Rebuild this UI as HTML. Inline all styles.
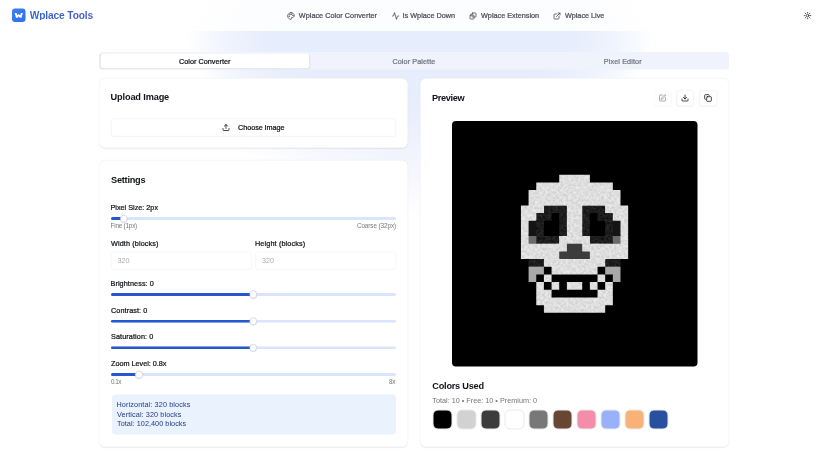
<!DOCTYPE html>
<html lang="en">
<head>
<meta charset="utf-8">
<title>Wplace Tools</title>
<style>
html,body{margin:0;padding:0;background:#fff;}
body{width:828px;height:457px;overflow:hidden;position:relative;font-family:"Liberation Sans",sans-serif;}
#root{position:absolute;left:0;top:0;width:1656px;height:914px;transform:scale(.5);transform-origin:0 0;overflow:hidden;}
.b{position:absolute;}
.i{position:absolute;display:block;overflow:hidden;}
.t{position:absolute;white-space:pre;line-height:20px;display:block;}
</style>
</head>
<body>
<div id="root">
<div class="b" style="left:0px;top:0px;width:1656px;height:914px;background:radial-gradient(ellipse 470px 200px at 840px 70px, rgba(230,237,252,1) 0%, rgba(230,237,252,1) 62%, rgba(230,237,252,.5) 81%, rgba(230,237,252,0) 100%),radial-gradient(ellipse 460px 364px at 840px 70px, rgba(238,240,253,1) 0%, rgba(238,240,253,1) 55%, rgba(238,240,253,.5) 77%, rgba(238,240,253,0) 100%);"></div>
<div class="b" style="left:0px;top:0px;width:1656px;height:62px;background:rgba(255,255,255,.88);"></div>
<div class="b" style="left:24px;top:17px;width:27px;height:27px;background:linear-gradient(135deg,#3b82f6,#2f6fe8);border-radius:6px;"><svg width="27" height="27" viewBox="0 0 27 27" style="display:block"><path d="M5.4 8.8 L9.3 8.8 L10.6 13.6 L13.5 10.8 L16.4 13.6 L17.7 8.8 L21.6 8.8 L19 18.4 L15.4 18.4 L13.5 15.6 L11.6 18.4 L8 18.4 Z" fill="#fff"/></svg></div>
<svg class="i" style="left:574.00px;top:23.50px;color:#484b55;" width="16" height="16" viewBox="0 0 24 24" fill="none" stroke="#484b55" stroke-width="2.4" stroke-linecap="round" stroke-linejoin="round"><circle cx="13.5" cy="6.5" r=".5" fill="currentColor"/><circle cx="17.5" cy="10.5" r=".5" fill="currentColor"/><circle cx="8.5" cy="7.5" r=".5" fill="currentColor"/><circle cx="6.5" cy="12.5" r=".5" fill="currentColor"/><path d="M12 2C6.5 2 2 6.5 2 12s4.5 10 10 10c.926 0 1.648-.746 1.648-1.688 0-.437-.18-.835-.437-1.125-.29-.289-.438-.652-.438-1.125a1.64 1.64 0 0 1 1.668-1.668h1.996c3.051 0 5.555-2.503 5.555-5.554C21.965 6.012 17.461 2 12 2z"/></svg>
<svg class="i" style="left:782.50px;top:23.50px;" width="16" height="16" viewBox="0 0 24 24" fill="none" stroke="#484b55" stroke-width="2.4" stroke-linecap="round" stroke-linejoin="round"><path d="M22 12h-2.48a2 2 0 0 0-1.93 1.46l-2.35 8.36a.25.25 0 0 1-.48 0L9.24 2.18a.25.25 0 0 0-.48 0l-2.35 8.36A2 2 0 0 1 4.49 12H2"/></svg>
<svg class="i" style="left:937.50px;top:23.50px;" width="16" height="16" viewBox="0 0 24 24" fill="none" stroke="#484b55" stroke-width="2.4" stroke-linecap="round" stroke-linejoin="round"><rect x="9" y="3" width="12" height="12" rx="2"/><rect x="3" y="9" width="12" height="12" rx="2"/></svg>
<svg class="i" style="left:1105.50px;top:23.50px;" width="16" height="16" viewBox="0 0 24 24" fill="none" stroke="#484b55" stroke-width="2.4" stroke-linecap="round" stroke-linejoin="round"><path d="M15 3h6v6"/><path d="M10 14 21 3"/><path d="M18 13v6a2 2 0 0 1-2 2H5a2 2 0 0 1-2-2V8a2 2 0 0 1 2-2h6"/></svg>
<svg class="i" style="left:1606.50px;top:22.80px;" width="16.4" height="16.4" viewBox="0 0 24 24" fill="none" stroke="#2a2d34" stroke-width="2.4" stroke-linecap="round" stroke-linejoin="round"><circle cx="12" cy="12" r="4"/><path d="M12 2v2"/><path d="M12 20v2"/><path d="m4.93 4.93 1.41 1.41"/><path d="m17.66 17.66 1.41 1.41"/><path d="M2 12h2"/><path d="M20 12h2"/><path d="m6.34 17.66-1.41 1.41"/><path d="m19.07 4.93-1.41 1.41"/></svg>
<div class="b" style="left:198px;top:104px;width:1260px;height:35px;background:#f0f3fc;border-radius:8px;"></div>
<div class="b" style="left:201px;top:107px;width:418px;height:30px;background:#fff;border-radius:6px;box-shadow:0 1px 3px rgba(0,0,0,.10),0 1px 2px rgba(0,0,0,.06);"></div>
<div class="b" style="left:198px;top:156px;width:618px;height:140px;background:#fff;border:1px solid #eef0f5;border-radius:12px;box-sizing:border-box;box-shadow:0 1px 3px rgba(0,0,0,.05),0 1px 2px rgba(0,0,0,.03);"></div>
<div class="b" style="left:198px;top:320px;width:618px;height:574px;background:#fff;border:1px solid #eef0f5;border-radius:12px;box-sizing:border-box;box-shadow:0 1px 3px rgba(0,0,0,.05),0 1px 2px rgba(0,0,0,.03);"></div>
<div class="b" style="left:840px;top:156px;width:618px;height:738px;background:#fff;border:1px solid #eef0f5;border-radius:12px;box-sizing:border-box;box-shadow:0 1px 3px rgba(0,0,0,.05),0 1px 2px rgba(0,0,0,.03);"></div>
<div class="b" style="left:222px;top:237px;width:570px;height:35.5px;background:#fff;border:1px solid #eceef2;border-radius:6px;box-sizing:border-box;box-shadow:0 1px 2px rgba(0,0,0,.04);"></div>
<svg class="i" style="left:444.00px;top:246.50px;" width="16" height="16" viewBox="0 0 24 24" fill="none" stroke="#101217" stroke-width="2.3" stroke-linecap="round" stroke-linejoin="round"><path d="M21 15v4a2 2 0 0 1-2 2H5a2 2 0 0 1-2-2v-4"/><polyline points="17 8 12 3 7 8"/><line x1="12" x2="12" y1="3" y2="15"/></svg>
<div class="b" style="left:222px;top:503px;width:281px;height:35.5px;background:#fff;border:1px solid #f1f2f5;border-radius:6px;box-sizing:border-box;box-shadow:0 1px 2px rgba(0,0,0,.03);"></div>
<div class="b" style="left:511px;top:503px;width:281px;height:35.5px;background:#fff;border:1px solid #f1f2f5;border-radius:6px;box-sizing:border-box;box-shadow:0 1px 2px rgba(0,0,0,.03);"></div>
<div class="b" style="left:222px;top:434.45px;width:570px;height:5.5px;background:#dbe4fa;border-radius:3px;"></div><div class="b" style="left:222px;top:434.45px;width:25.871px;height:5.5px;background:#2458d0;border-radius:3px 0 0 3px;"></div><div class="b" style="left:240.271px;top:429.6px;width:15.2px;height:15.2px;background:#fff;border:1px solid #b4bcdc;border-radius:50%;box-sizing:border-box;box-shadow:0 1px 2px rgba(0,0,0,.10);"></div>
<div class="b" style="left:222px;top:586.25px;width:570px;height:5.5px;background:#dbe4fa;border-radius:3px;"></div><div class="b" style="left:222px;top:586.25px;width:284.4px;height:5.5px;background:#2458d0;border-radius:3px 0 0 3px;"></div><div class="b" style="left:498.8px;top:581.4px;width:15.2px;height:15.2px;background:#fff;border:1px solid #b4bcdc;border-radius:50%;box-sizing:border-box;box-shadow:0 1px 2px rgba(0,0,0,.10);"></div>
<div class="b" style="left:222px;top:639.55px;width:570px;height:5.5px;background:#dbe4fa;border-radius:3px;"></div><div class="b" style="left:222px;top:639.55px;width:284.4px;height:5.5px;background:#2458d0;border-radius:3px 0 0 3px;"></div><div class="b" style="left:498.8px;top:634.7px;width:15.2px;height:15.2px;background:#fff;border:1px solid #b4bcdc;border-radius:50%;box-sizing:border-box;box-shadow:0 1px 2px rgba(0,0,0,.10);"></div>
<div class="b" style="left:222px;top:692.85px;width:570px;height:5.5px;background:#dbe4fa;border-radius:3px;"></div><div class="b" style="left:222px;top:692.85px;width:284.4px;height:5.5px;background:#2458d0;border-radius:3px 0 0 3px;"></div><div class="b" style="left:498.8px;top:688px;width:15.2px;height:15.2px;background:#fff;border:1px solid #b4bcdc;border-radius:50%;box-sizing:border-box;box-shadow:0 1px 2px rgba(0,0,0,.10);"></div>
<div class="b" style="left:222px;top:746.45px;width:570px;height:5.5px;background:#dbe4fa;border-radius:3px;"></div><div class="b" style="left:222px;top:746.45px;width:56.0886px;height:5.5px;background:#2458d0;border-radius:3px 0 0 3px;"></div><div class="b" style="left:270.489px;top:741.6px;width:15.2px;height:15.2px;background:#fff;border:1px solid #b4bcdc;border-radius:50%;box-sizing:border-box;box-shadow:0 1px 2px rgba(0,0,0,.10);"></div>
<div class="b" style="left:223.6px;top:788.8px;width:568.4px;height:80.4px;background:#eaf2fe;border-radius:8px;"></div>
<div class="b" style="left:1307.7px;top:179.5px;width:35px;height:32px;background:#fff;border:1px solid #eceef2;border-radius:6px;box-sizing:border-box;box-shadow:0 1px 2px rgba(0,0,0,.04);opacity:0.5;"></div>
<svg class="i" style="left:1317.20px;top:187.70px;" width="16" height="16" viewBox="0 0 24 24" fill="none" stroke="#8d9199" stroke-width="2.3" stroke-linecap="round" stroke-linejoin="round"><path d="M12 3H5a2 2 0 0 0-2 2v14a2 2 0 0 0 2 2h14a2 2 0 0 0 2-2v-7"/><path d="M18.375 2.625a1 1 0 0 1 3 3l-9.013 9.014a2 2 0 0 1-.853.505l-2.873.84a.5.5 0 0 1-.62-.62l.84-2.873a2 2 0 0 1 .506-.852z"/></svg>
<div class="b" style="left:1352.9px;top:179.5px;width:35px;height:32px;background:#fff;border:1px solid #eceef2;border-radius:6px;box-sizing:border-box;box-shadow:0 1px 2px rgba(0,0,0,.04);opacity:1;"></div>
<svg class="i" style="left:1362.40px;top:187.70px;" width="16" height="16" viewBox="0 0 24 24" fill="none" stroke="#101217" stroke-width="2.3" stroke-linecap="round" stroke-linejoin="round"><path d="M21 15v4a2 2 0 0 1-2 2H5a2 2 0 0 1-2-2v-4"/><polyline points="7 10 12 15 17 10"/><line x1="12" x2="12" y1="15" y2="3"/></svg>
<div class="b" style="left:1398.7px;top:179.5px;width:35px;height:32px;background:#fff;border:1px solid #eceef2;border-radius:6px;box-sizing:border-box;box-shadow:0 1px 2px rgba(0,0,0,.04);opacity:1;"></div>
<svg class="i" style="left:1408.20px;top:187.70px;" width="16" height="16" viewBox="0 0 24 24" fill="none" stroke="#101217" stroke-width="2.3" stroke-linecap="round" stroke-linejoin="round"><rect width="14" height="14" x="8" y="8" rx="2" ry="2"/><path d="M4 16c-1.1 0-2-.9-2-2V4c0-1.1.9-2 2-2h10c1.1 0 2 .9 2 2"/></svg>
<div class="b" style="left:904.4px;top:242px;width:490.2px;height:491px;background:#000;border-radius:8px;overflow:hidden;"><svg style="display:block;position:absolute;left:0;top:0" width="490.2" height="491" viewBox="0 0 32 32" preserveAspectRatio="none"><defs><filter id="nz" x="0" y="0" width="32" height="32" filterUnits="userSpaceOnUse" color-interpolation-filters="sRGB"><feTurbulence type="fractalNoise" baseFrequency="3" numOctaves="2" seed="7" result="t"/><feColorMatrix in="t" type="matrix" values="1 0 0 0 0 1 0 0 0 0 1 0 0 0 0 0 0 0 0 1" result="g"/><feComposite in="SourceGraphic" in2="g" operator="arithmetic" k1="0" k2="1" k3="0.2" k4="-0.10" result="m"/><feComposite in="m" in2="SourceGraphic" operator="in"/></filter></defs><path fill="#dedede" filter="url(#nz)" d="M13.8 7H18.2V8H13.8ZM14 6.8H18V7H14ZM14 8H18V8.2H14ZM10.8 8H21.2V9H10.8ZM11 7.8H21V8H11ZM11 9H21V9.2H11ZM9.8 9H22.2V10H9.8ZM10 8.8H22V9H10ZM10 10H22V10.2H10ZM9.8 10H22.2V11H9.8ZM10 9.8H22V10H10ZM10 11H22V11.2H10ZM8.8 11H12.2V12H8.8ZM9 10.8H12V11H9ZM9 12H12V12.2H9ZM14.8 11H17.2V12H14.8ZM15 10.8H17V11H15ZM15 12H17V12.2H15ZM19.8 11H23.2V12H19.8ZM20 10.8H23V11H20ZM20 12H23V12.2H20ZM8.8 12H11.2V13H8.8ZM9 11.8H11V12H9ZM9 13H11V13.2H9ZM14.8 12H17.2V13H14.8ZM15 11.8H17V12H15ZM15 13H17V13.2H15ZM20.8 12H23.2V13H20.8ZM21 11.8H23V12H21ZM21 13H23V13.2H21ZM8.8 13H10.2V14H8.8ZM9 12.8H10V13H9ZM9 14H10V14.2H9ZM14.8 13H17.2V14H14.8ZM15 12.8H17V13H15ZM15 14H17V14.2H15ZM21.8 13H23.2V14H21.8ZM22 12.8H23V13H22ZM22 14H23V14.2H22ZM8.8 14H10.2V15H8.8ZM9 13.8H10V14H9ZM9 15H10V15.2H9ZM14.8 14H17.2V15H14.8ZM15 13.8H17V14H15ZM15 15H17V15.2H15ZM21.8 14H23.2V15H21.8ZM22 13.8H23V14H22ZM22 15H23V15.2H22ZM8.8 15H10.2V16H8.8ZM9 14.8H10V15H9ZM9 16H10V16.2H9ZM13.8 15H18.2V16H13.8ZM14 14.8H18V15H14ZM14 16H18V16.2H14ZM21.8 15H23.2V16H21.8ZM22 14.8H23V15H22ZM22 16H23V16.2H22ZM8.8 16H15.2V17H8.8ZM9 15.8H15V16H9ZM9 17H15V17.2H9ZM16.8 16H23.2V17H16.8ZM17 15.8H23V16H17ZM17 17H23V17.2H17ZM8.8 17H14.2V18H8.8ZM9 16.8H14V17H9ZM9 18H14V18.2H9ZM17.8 17H23.2V18H17.8ZM18 16.8H23V17H18ZM18 18H23V18.2H18ZM11.8 18H20.2V19H11.8ZM12 17.8H20V18H12ZM12 19H20V19.2H12ZM12.8 19H19.2V20H12.8ZM13 18.8H19V19H13ZM13 20H19V20.2H13ZM11.8 20H13.2V21H11.8ZM12 19.8H13V20H12ZM12 21H13V21.2H12ZM18.8 20H20.2V21H18.8ZM19 19.8H20V20H19ZM19 21H20V21.2H19ZM10.8 21H12.2V22H10.8ZM11 20.8H12V21H11ZM11 22H12V22.2H11ZM12.8 21H14.2V22H12.8ZM13 20.8H14V21H13ZM13 22H14V22.2H13ZM14.8 21H17.2V22H14.8ZM15 20.8H17V21H15ZM15 22H17V22.2H15ZM17.8 21H19.2V22H17.8ZM18 20.8H19V21H18ZM18 22H19V22.2H18ZM19.8 21H21.2V22H19.8ZM20 20.8H21V21H20ZM20 22H21V22.2H20ZM10.8 22H13.2V23H10.8ZM11 21.8H13V22H11ZM11 23H13V23.2H11ZM18.8 22H21.2V23H18.8ZM19 21.8H21V22H19ZM19 23H21V23.2H19ZM10.8 23H21.2V24H10.8ZM11 22.8H21V23H11ZM11 24H21V24.2H11ZM11.8 24H20.2V25H11.8ZM12 23.8H20V24H12ZM12 25H20V25.2H12Z"/><path fill="#a8a8a8" d="M9.8 19H12.2V20H9.8ZM10 18.8H12V19H10ZM10 20H12V20.2H10ZM19.8 19H22.2V20H19.8ZM20 18.8H22V19H20ZM20 20H22V20.2H20ZM9.8 20H11.2V21H9.8ZM10 19.8H11V20H10ZM10 21H11V21.2H10ZM20.8 20H22.2V21H20.8ZM21 19.8H22V20H21ZM21 21H22V21.2H21Z"/><path fill="#6a6a6a" d="M10 15H11.2V16H10ZM10 14.8H11V15H10ZM20.8 15H22V16H20.8ZM21 14.8H22V15H21Z"/><path fill="#3c3c3c" d="M15 16H17V17H15ZM15 17H17V17.2H15ZM14 17H18V18H14ZM15 16.8H17V17H15Z"/><path fill="#1d1d1d" filter="url(#nz)" d="M12 11H15V12H12ZM12 12H15V12.2H12ZM17 11H20V12H17ZM17 12H20V12.2H17ZM11 12H13.2V13H11ZM12 11.8H13V12H12ZM11 13H13V13.2H11ZM13.8 12H15V13H13.8ZM14 11.8H15V12H14ZM14 13H15V13.2H14ZM17 12H18.2V13H17ZM17 11.8H18V12H17ZM17 13H18V13.2H17ZM18.8 12H21V13H18.8ZM19 11.8H20V12H19ZM19 13H21V13.2H19ZM10.8 13H12.2V14H10.8ZM11 12.8H12V13H11ZM11 14H12V14.2H11ZM13.8 13H15V14H13.8ZM14 12.8H15V13H14ZM14 14H15V14.2H14ZM17 13H18.2V14H17ZM17 12.8H18V13H17ZM17 14H18V14.2H17ZM19.8 13H21.2V14H19.8ZM20 12.8H21V13H20ZM20 14H21V14.2H20ZM10.8 14H12.2V15H10.8ZM11 13.8H12V14H11ZM11 15H12V15.2H11ZM13.8 14H15V15H13.8ZM14 13.8H15V14H14ZM17 14H18.2V15H17ZM17 13.8H18V14H17ZM19.8 14H21.2V15H19.8ZM20 13.8H21V14H20ZM20 15H21V15.2H20ZM11 15H14V16H11ZM11 14.8H14V15H11ZM18 15H21V16H18ZM18 14.8H21V15H18ZM9.8 18H12V19H9.8ZM20 18H22.2V19H20Z"/><path fill="#141414" d="M10 13H11V14H10ZM10 14H11V14.2H10ZM21 13H22V14H21ZM21 14H22V14.2H21ZM10 14H11V15H10ZM10 13.8H11V14H10ZM21 14H22V15H21ZM21 13.8H22V14H21Z"/><path fill="#000000" d="M8 6H24V7H8ZM8 5.8H24V6H8ZM8 7H14V7.2H8ZM18 7H24V7.2H18ZM8 7H14V8H8ZM8 6.8H14V7H8ZM8 8H11V8.2H8ZM18 7H24V8H18ZM18 6.8H24V7H18ZM21 8H24V8.2H21ZM8 8H11V9H8ZM8 7.8H11V8H8ZM8 9H10V9.2H8ZM21 8H24V9H21ZM21 7.8H24V8H21ZM22 9H24V9.2H22ZM8 9H10V10H8ZM8 8.8H10V9H8ZM8 10H10V10.2H8ZM22 9H24V10H22ZM22 8.8H24V9H22ZM22 10H24V10.2H22ZM8 10H10V11H8ZM8 9.8H10V10H8ZM8 11H9V11.2H8ZM22 10H24V11H22ZM22 9.8H24V10H22ZM23 11H24V11.2H23ZM8 11H9V12H8ZM8 10.8H9V11H8ZM8 12H9V12.2H8ZM23 11H24V12H23ZM23 10.8H24V11H23ZM23 12H24V12.2H23ZM8 12H9V13H8ZM8 11.8H9V12H8ZM8 13H9V13.2H8ZM13 12H14V13H13ZM13 13H14V13.2H13ZM18 12H19V13H18ZM18 13H19V13.2H18ZM23 12H24V13H23ZM23 11.8H24V12H23ZM23 13H24V13.2H23ZM8 13H9V14H8ZM8 12.8H9V13H8ZM8 14H9V14.2H8ZM12 13H14V14H12ZM13 12.8H14V13H13ZM12 14H14V14.2H12ZM18 13H20V14H18ZM18 12.8H19V13H18ZM18 14H20V14.2H18ZM23 13H24V14H23ZM23 12.8H24V13H23ZM23 14H24V14.2H23ZM8 14H9V15H8ZM8 13.8H9V14H8ZM8 15H9V15.2H8ZM12 14H14V15H12ZM12 13.8H14V14H12ZM18 14H20V15H18ZM18 13.8H20V14H18ZM23 14H24V15H23ZM23 13.8H24V14H23ZM23 15H24V15.2H23ZM8 15H9V16H8ZM8 14.8H9V15H8ZM8 16H9V16.2H8ZM23 15H24V16H23ZM23 14.8H24V15H23ZM23 16H24V16.2H23ZM8 16H9V17H8ZM8 15.8H9V16H8ZM8 17H9V17.2H8ZM23 16H24V17H23ZM23 15.8H24V16H23ZM23 17H24V17.2H23ZM8 17H9V18H8ZM8 16.8H9V17H8ZM8 18H9V18.2H8ZM23 17H24V18H23ZM23 16.8H24V17H23ZM23 18H24V18.2H23ZM8 18H10V19H8ZM8 17.8H9V18H8ZM8 19H10V19.2H8ZM22 18H24V19H22ZM23 17.8H24V18H23ZM22 19H24V19.2H22ZM8 19H10V20H8ZM8 18.8H10V19H8ZM8 20H10V20.2H8ZM12 19H13V20H12ZM19 19H20V20H19ZM22 19H24V20H22ZM22 18.8H24V19H22ZM22 20H24V20.2H22ZM8 20H10V21H8ZM8 19.8H10V20H8ZM8 21H10V21.2H8ZM11 20H12V21H11ZM13 20H19V21H13ZM14 21H15V21.2H14ZM17 21H18V21.2H17ZM20 20H21V21H20ZM22 20H24V21H22ZM22 19.8H24V20H22ZM22 21H24V21.2H22ZM8 21H11V22H8ZM8 20.8H10V21H8ZM8 22H11V22.2H8ZM12 21H13V22H12ZM14 21H15V22H14ZM14 20.8H15V21H14ZM14 22H15V22.2H14ZM17 21H18V22H17ZM17 20.8H18V21H17ZM17 22H18V22.2H17ZM19 21H20V22H19ZM21 21H24V22H21ZM22 20.8H24V21H22ZM21 22H24V22.2H21ZM8 22H11V23H8ZM8 21.8H11V22H8ZM8 23H11V23.2H8ZM13 22H19V23H13ZM14 21.8H15V22H14ZM17 21.8H18V22H17ZM21 22H24V23H21ZM21 21.8H24V22H21ZM21 23H24V23.2H21ZM8 23H11V24H8ZM8 22.8H11V23H8ZM8 24H11V24.2H8ZM21 23H24V24H21ZM21 22.8H24V23H21ZM21 24H24V24.2H21ZM8 24H12V25H8ZM8 23.8H11V24H8ZM8 25H12V25.2H8ZM20 24H24V25H20ZM21 23.8H24V24H21ZM20 25H24V25.2H20ZM8 25H24V26H8ZM8 24.8H12V25H8ZM20 24.8H24V25H20ZM8 26H24V26.2H8Z"/></svg></div>
<div class="b" style="left:865px;top:819px;width:40px;height:40px;background:#000000;border:2px solid #e8eaee;border-radius:11px;box-sizing:border-box;"></div>
<div class="b" style="left:913px;top:819px;width:40px;height:40px;background:#d2d2d2;border:2px solid #e8eaee;border-radius:11px;box-sizing:border-box;"></div>
<div class="b" style="left:961px;top:819px;width:40px;height:40px;background:#3c3c3c;border:2px solid #e8eaee;border-radius:11px;box-sizing:border-box;"></div>
<div class="b" style="left:1009px;top:819px;width:40px;height:40px;background:#ffffff;border:2px solid #e8eaee;border-radius:11px;box-sizing:border-box;"></div>
<div class="b" style="left:1057px;top:819px;width:40px;height:40px;background:#787878;border:2px solid #e8eaee;border-radius:11px;box-sizing:border-box;"></div>
<div class="b" style="left:1105px;top:819px;width:40px;height:40px;background:#684634;border:2px solid #e8eaee;border-radius:11px;box-sizing:border-box;"></div>
<div class="b" style="left:1153px;top:819px;width:40px;height:40px;background:#f38da9;border:2px solid #e8eaee;border-radius:11px;box-sizing:border-box;"></div>
<div class="b" style="left:1201px;top:819px;width:40px;height:40px;background:#99b1fb;border:2px solid #e8eaee;border-radius:11px;box-sizing:border-box;"></div>
<div class="b" style="left:1249px;top:819px;width:40px;height:40px;background:#f8b277;border:2px solid #e8eaee;border-radius:11px;box-sizing:border-box;"></div>
<div class="b" style="left:1297px;top:819px;width:40px;height:40px;background:#28509e;border:2px solid #e8eaee;border-radius:11px;box-sizing:border-box;"></div>
<span class="t" style="left:59.60px;top:20.25px;font-size:20.4px;font-weight:700;color:#3560d0;letter-spacing:-0.288px;background:linear-gradient(90deg,#3364d2,#4a5cc6);-webkit-background-clip:text;background-clip:text;color:transparent;">Wplace Tools</span>
<span class="t" style="left:597.60px;top:20.25px;font-size:14.5px;font-weight:400;color:#484b55;letter-spacing:0.072px;-webkit-text-stroke:0.45px #484b55;">Wplace Color Converter</span>
<span class="t" style="left:805.00px;top:20.25px;font-size:14.5px;font-weight:400;color:#484b55;letter-spacing:0.039px;-webkit-text-stroke:0.45px #484b55;">Is Wplace Down</span>
<span class="t" style="left:962.00px;top:20.25px;font-size:14.5px;font-weight:400;color:#484b55;letter-spacing:0.014px;-webkit-text-stroke:0.45px #484b55;">Wplace Extension</span>
<span class="t" style="left:1129.80px;top:20.25px;font-size:14.5px;font-weight:400;color:#484b55;letter-spacing:-0.011px;-webkit-text-stroke:0.45px #484b55;">Wplace Live</span>
<span class="t" style="left:358.00px;top:112.25px;font-size:14.5px;font-weight:400;color:#101217;letter-spacing:0.035px;-webkit-text-stroke:0.45px #101217;">Color Converter</span>
<span class="t" style="left:784.80px;top:112.25px;font-size:14.5px;font-weight:400;color:#6f7480;letter-spacing:0.170px;-webkit-text-stroke:0.45px #6f7480;">Color Palette</span>
<span class="t" style="left:1207.60px;top:112.25px;font-size:14.5px;font-weight:400;color:#6f7480;letter-spacing:0.208px;-webkit-text-stroke:0.45px #6f7480;">Pixel Editor</span>
<span class="t" style="left:221.20px;top:183.25px;font-size:18.4px;font-weight:700;color:#101217;letter-spacing:-0.305px;">Upload Image</span>
<span class="t" style="left:476.20px;top:244.25px;font-size:14.5px;font-weight:400;color:#101217;letter-spacing:-0.149px;-webkit-text-stroke:0.45px #101217;">Choose Image</span>
<span class="t" style="left:222.20px;top:349.25px;font-size:18.4px;font-weight:700;color:#101217;letter-spacing:-0.531px;">Settings</span>
<span class="t" style="left:221.00px;top:404.25px;font-size:14.5px;font-weight:400;color:#101217;letter-spacing:-0.004px;-webkit-text-stroke:0.45px #101217;">Pixel Size: 2px</span>
<span class="t" style="left:221.00px;top:441.25px;font-size:12.6px;font-weight:400;color:#74767c;letter-spacing:-0.366px;">Fine (1px)</span>
<span class="t" style="left:713.80px;top:441.25px;font-size:12.6px;font-weight:400;color:#74767c;letter-spacing:-0.117px;">Coarse (32px)</span>
<span class="t" style="left:222.00px;top:476.25px;font-size:14.5px;font-weight:400;color:#101217;letter-spacing:0.229px;-webkit-text-stroke:0.45px #101217;">Width (blocks)</span>
<span class="t" style="left:510.00px;top:476.25px;font-size:14.5px;font-weight:400;color:#101217;letter-spacing:0.266px;-webkit-text-stroke:0.45px #101217;">Height (blocks)</span>
<span class="t" style="left:234.80px;top:510.25px;font-size:14.5px;font-weight:400;color:#aaabae;letter-spacing:0.136px;">320</span>
<span class="t" style="left:523.80px;top:510.25px;font-size:14.5px;font-weight:400;color:#aaabae;letter-spacing:0.136px;">320</span>
<span class="t" style="left:221.00px;top:556.25px;font-size:14.5px;font-weight:400;color:#101217;letter-spacing:0.170px;-webkit-text-stroke:0.45px #101217;">Brightness: 0</span>
<span class="t" style="left:222.00px;top:610.25px;font-size:14.5px;font-weight:400;color:#101217;letter-spacing:0.174px;-webkit-text-stroke:0.45px #101217;">Contrast: 0</span>
<span class="t" style="left:222.00px;top:662.25px;font-size:14.5px;font-weight:400;color:#101217;letter-spacing:0.204px;-webkit-text-stroke:0.45px #101217;">Saturation: 0</span>
<span class="t" style="left:222.00px;top:716.25px;font-size:14.5px;font-weight:400;color:#101217;letter-spacing:-0.025px;-webkit-text-stroke:0.45px #101217;">Zoom Level: 0.8x</span>
<span class="t" style="left:222.00px;top:753.25px;font-size:12.6px;font-weight:400;color:#74767c;letter-spacing:-0.969px;">0.1x</span>
<span class="t" style="left:778.08px;top:753.25px;font-size:12.6px;font-weight:400;color:#74767c;letter-spacing:-0.484px;">8x</span>
<span class="t" style="left:233.00px;top:798.25px;font-size:14.5px;font-weight:400;color:#1e3a8a;letter-spacing:0.238px;">Horizontal: 320 blocks</span>
<span class="t" style="left:234.00px;top:818.25px;font-size:14.5px;font-weight:400;color:#1e3a8a;letter-spacing:0.206px;">Vertical: 320 blocks</span>
<span class="t" style="left:234.00px;top:836.25px;font-size:14.5px;font-weight:400;color:#1e3a8a;letter-spacing:0.106px;">Total: 102,400 blocks</span>
<span class="t" style="left:864.00px;top:185.25px;font-size:18.4px;font-weight:700;color:#101217;letter-spacing:-0.703px;">Preview</span>
<span class="t" style="left:864.60px;top:761.25px;font-size:18.4px;font-weight:700;color:#101217;letter-spacing:-0.489px;">Colors Used</span>
<span class="t" style="left:864.60px;top:790.25px;font-size:14.5px;font-weight:400;color:#74767c;letter-spacing:0.008px;">Total: 10 • Free: 10 • Premium: 0</span>
</div>
</body>
</html>
